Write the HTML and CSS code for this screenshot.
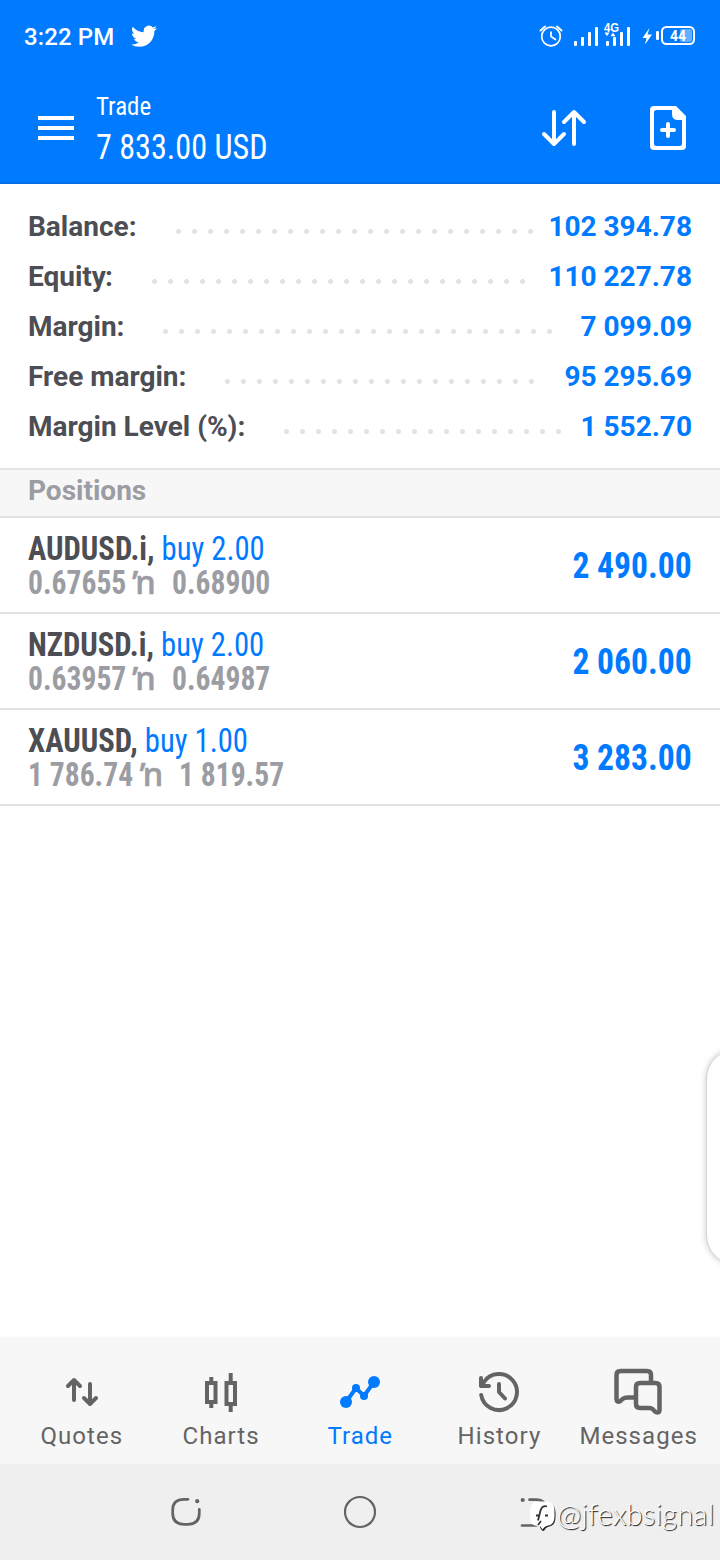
FILE: index.html
```html
<!DOCTYPE html>
<html lang="en">
<head>
<meta charset="utf-8">
<title>Trade</title>
<link rel="stylesheet" href="styles.css">
</head>
<body>
<div class="screen">
  <header class="top">
    <div class="status">
      <span class="clock">3:22 PM</span>
      <svg class="bird" width="26" height="22" viewBox="0 0 24 19.5"><path fill="#fff" d="M23.95 2.57a10 10 0 0 1-2.82.77 4.96 4.96 0 0 0 2.16-2.72c-.95.55-2 .95-3.13 1.18a4.92 4.92 0 0 0-8.38 4.48C7.69 6.1 4.07 4.13 1.64 1.16a4.82 4.82 0 0 0-.67 2.48c0 1.71.87 3.21 2.19 4.1a4.9 4.9 0 0 1-2.23-.62v.06a4.92 4.92 0 0 0 3.95 4.83 5 5 0 0 1-2.21.08 4.94 4.94 0 0 0 4.6 3.42A9.87 9.87 0 0 1 0 17.54a14 14 0 0 0 7.55 2.21c9.05 0 14-7.5 14-13.98 0-.21 0-.42-.02-.63a9.94 9.94 0 0 0 2.46-2.55z"/></svg>
      <svg class="system" width="160" height="30" viewBox="538 20 160 30" fill="none" stroke="#fff">
        <g stroke-width="1.7" stroke-linecap="round"><circle cx="551" cy="36.5" r="9.3"/><path d="M551 32v4.5l4.500 3"/><path d="M540.5 30.5l4.500-4M561.500 30.500l-4.500-4" stroke-width="2"/></g>
        <g fill="#fff" stroke="none">
          <rect x="574" y="41" width="3" height="5" rx="1"/><rect x="581" y="37" width="3" height="9" rx="1"/><rect x="588" y="32" width="3" height="14" rx="1"/><rect x="595" y="27" width="3" height="19" rx="1"/>
          <rect x="606" y="41" width="3" height="5" rx="1"/><rect x="613" y="37" width="3" height="9" rx="1"/><rect x="620" y="32" width="3" height="14" rx="1"/><rect x="627" y="27" width="3" height="19" rx="1"/>
          <path d="M604.500 32.500h5l-2.500 3.800zM610.500 36.300h5l-2.500-3.800z"/>
          <path d="M649.500 28l-7 10h4l-1.500 6.500 7-10h-4.500z"/><rect x="656" y="31" width="3" height="9" rx="1.300"/>
          <rect x="680" y="29" width="12" height="13" rx="2" fill="#66aeff"/>
          <text x="604" y="31.500" class="net" textLength="15" lengthAdjust="spacingAndGlyphs">4G</text>
          <text x="670" y="41.300" class="batt" textLength="16" lengthAdjust="spacingAndGlyphs">44</text>
        </g>
        <rect x="662" y="27" width="32" height="17" rx="4.500" stroke-width="2"/>
      </svg>
    </div>
    <div class="appbar">
      <svg class="menu" width="36" height="24" viewBox="0 0 36 24"><path d="M0 2h36M0 12h36M0 22h36" stroke="#fff" stroke-width="4"/></svg>
      <div class="titles">
        <div class="title cond">Trade</div>
        <div class="total cond">7 833.00 USD</div>
      </div>
      <svg class="sort" width="46" height="38" viewBox="541 109 46 38" fill="none" stroke="#fff" stroke-width="4" stroke-linecap="round" stroke-linejoin="round"><path d="M554 112v32M544 134l10 10 10-10M574 144v-32M564 122l10-10 10 10"/></svg>
      <svg class="add" width="36" height="44" viewBox="650 106 36 44"><path fill="#fff" fill-rule="evenodd" d="M654 106h22l10 10v30q0 4-4 4h-28q-4 0-4-4v-36q0-4 4-4zM656.500 110q-2.500 0-2.500 2.500v31q0 2.500 2.500 2.500h23q2.500 0 2.500-2.500v-23.500h-4q-6 0-6-6v-4z"/><path d="M668 124v12M662 130h12" stroke="#fff" stroke-width="4" stroke-linecap="round"/></svg>
    </div>
  </header>

  <section class="account">
    <div class="row"><span class="label">Balance:</span><span class="dots" style="--n:23"></span><span class="value">102 394.78</span></div>
    <div class="row"><span class="label">Equity<span class="tight">:</span></span><span class="dots" style="--n:24"></span><span class="value">110 227.78</span></div>
    <div class="row"><span class="label">Margin:</span><span class="dots" style="--n:25"></span><span class="value">7 099.09</span></div>
    <div class="row"><span class="label">Free margin:</span><span class="dots" style="--n:20"></span><span class="value">95 295.69</span></div>
    <div class="row"><span class="label">Margin Level (%):</span><span class="dots" style="--n:18"></span><span class="value">1 552.70</span></div>
  </section>

  <h2 class="heading">Positions</h2>

  <main class="positions">
    <article class="position">
      <div class="info">
        <div class="deal cond"><b>AUDUSD.i,</b> <span class="side">buy 2.00</span></div>
        <div class="prices cond"><span class="num">0.67655</span><span class="mark">ŉ</span><span class="num">0.68900</span></div>
      </div>
      <div class="profit cond">2 490.00</div>
    </article>
    <article class="position">
      <div class="info">
        <div class="deal cond"><b>NZDUSD.i,</b> <span class="side">buy 2.00</span></div>
        <div class="prices cond"><span class="num">0.63957</span><span class="mark">ŉ</span><span class="num">0.64987</span></div>
      </div>
      <div class="profit cond">2 060.00</div>
    </article>
    <article class="position">
      <div class="info">
        <div class="deal cond"><b>XAUUSD,</b> <span class="side">buy 1.00</span></div>
        <div class="prices cond"><span class="num">1 786.74</span><span class="mark">ŉ</span><span class="num">1 819.57</span></div>
      </div>
      <div class="profit cond">3 283.00</div>
    </article>
  </main>

  <div class="edge-panel"></div>

  <nav class="tabs">
    <div class="tab"><svg width="52" height="52" viewBox="56 1366 52 52" fill="none" stroke="currentColor" stroke-width="4" stroke-linecap="round" stroke-linejoin="round"><path d="M74 1400v-20M68 1386l6-6 6 6M90 1384v20M84 1398l6 6 6-6"/></svg><span>Quotes</span></div>
    <div class="tab"><svg width="52" height="52" viewBox="195 1366 52 52" fill="none" stroke="currentColor" stroke-width="4"><path d="M207 1383h8.500v19h-8.500zM211.300 1377v5M211.300 1403v5M226.500 1383h8.500v21h-8.500zM230.700 1373v9M230.700 1405v7"/></svg><span>Charts</span></div>
    <div class="tab active"><svg width="52" height="52" viewBox="334 1366 52 52" fill="none" stroke="currentColor" stroke-width="4"><path d="M346 1402l10-14 8 8 10-14"/><g fill="currentColor" stroke="none"><circle cx="346" cy="1402" r="6"/><circle cx="356" cy="1388" r="4"/><circle cx="364" cy="1396" r="4"/><circle cx="374" cy="1382" r="6"/></g></svg><span>Trade</span></div>
    <div class="tab"><svg width="52" height="52" viewBox="473 1366 52 52" fill="none" stroke="currentColor" stroke-width="4" stroke-linecap="round" stroke-linejoin="round"><path d="M481.200 1395a18 18 0 1 0 2.800-13l-3 4M481 1378v8h8M499 1384v8l6 6.500"/></svg><span>History</span></div>
    <div class="tab"><svg width="52" height="52" viewBox="612 1366 52 52" fill="none" stroke="currentColor" stroke-width="4.500" stroke-linecap="round" stroke-linejoin="round"><path d="M651 1382v-7q0-4-4-4h-26.500q-4 0-4 4v24q0 4 4 2l2-2q2-1.500 5-1.500h6M640 1383h15.500q4 0 4 4v23q0 3.500-4 2l-3-3q-1-1-3-1h-9.500q-4 0-4-4v-17q0-4 4-4z"/></svg><span>Messages</span></div>
  </nav>

  <footer class="system-nav">
    <svg width="36" height="36" viewBox="168 1494 36 36" fill="none" stroke="#646464" stroke-width="2.700" stroke-linecap="round"><path d="M188 1499.300h-4q-11.300 0-11.300 10.500v3.500q0 11 11.300 11h4q11.300 0 11.300-11v-4"/><circle cx="197.200" cy="1501.200" r="2.100" fill="#646464" stroke="none"/></svg>
    <svg width="36" height="36" viewBox="0 0 36 36" fill="none" stroke="#646464" stroke-width="2.200"><circle cx="18" cy="18" r="15"/></svg>
    <svg width="36" height="36" viewBox="516 1494 36 36" fill="none" stroke="#646464" stroke-width="2.700" stroke-linecap="round"><path d="M529.500 1499.700h6q11.500 0 11.500 12.300t-11.500 13.500h-13.500"/><circle cx="522.700" cy="1500" r="2.100" fill="#646464" stroke="none"/></svg>
    <div class="watermark">
      <svg width="30" height="34" viewBox="526 1500 30 34"><path d="M540 1504h8q7.500 1 7.500 9v5q0 8-6 9.500-4 .5-5.500 4.500l-2-.5-2-3z" fill="#222"/><path d="M538 1502.500h8q8.500 0 8.500 9v6q0 7.500-6 9-4 .5-6 4l-2.500-3.500h-2q-8 0-8-9v-6q0-9.500 8-9.500z" fill="#fff"/><path d="M547 1507.500q-5-1.500-6.500 4l-2.500 10M536 1516.500h3M545 1516.500h3M541 1522l-3 4" fill="none" stroke="#333" stroke-width="1.800"/></svg>
      <span>@jfexbsignal</span>
    </div>
  </footer>
</div>
</body>
</html>
```
FILE: styles.css
```css
* { box-sizing: border-box; }
body { margin: 0; font-family: Roboto, "Liberation Sans", sans-serif; background: #fff; }
svg { display: block; flex: none; }
.screen { position: relative; display: flex; flex-direction: column; width: 720px; height: 1560px; overflow: hidden; }
.cond { font-family: "Roboto Condensed", Roboto, sans-serif; font-stretch: 75%; white-space: pre; transform-origin: left center; }

.top { height: 184px; background: #007aff; border-bottom: 2px solid #006ee6; color: #fff; }
.status { display: flex; align-items: center; height: 72px; padding: 0 22px 0 24px; }
.clock { font-size: 24px; font-weight: 500; width: 107px; line-height: 28px; white-space: nowrap; padding-top: 2px; letter-spacing: .1px; }
.system { margin-left: auto; margin-top: -2px; }
.net { font: 700 13px "Liberation Sans", sans-serif; }
.batt { font: 700 15.500px Roboto, sans-serif; }
.appbar { display: flex; align-items: center; height: 110px; padding: 0 34px 0 38px; }
.menu { margin-top: 2px; }
.titles { flex: 1; margin-left: 22px; padding-top: 1px; }
.title { font-size: 26.500px; line-height: 38px; transform: scaleX(.94); }
.total { font-size: 34.500px; line-height: 44px; transform: scaleX(.932); }
.sort { margin-right: 63px; margin-top: 2px; }
.add { margin-top: 2px; }

.account { height: 284px; padding-top: 17px; }
.row { display: flex; align-items: center; height: 50px; padding: 0 28px; font-size: 28px; font-weight: 700; color: #4d4d54; white-space: nowrap; }
.tight { margin-left: -1px; }
.dots { width: calc(var(--n) * 16px); height: 5px; margin: 10px 0 0 39px; background: radial-gradient(circle at 2.5px 2.5px, #e3e3e5 2.2px, transparent 2.8px) 0 0 / 16px 5px; }
.value { margin-left: auto; color: #007aff; }

.heading { height: 50px; margin: 0; padding: 0 28px; border-top: 2px solid #e3e3e3; border-bottom: 2px solid #e3e3e3; background: #f7f7f7; color: #9c9ca3; font-size: 28px; font-weight: 700; line-height: 42px; }
.position { display: flex; align-items: center; justify-content: space-between; height: 96px; padding: 2px 28px 0; border-bottom: 2px solid #e3e3e3; }
.deal, .prices { height: 34px; font-size: 32.500px; line-height: 34px; }
.deal { color: #4d4d54; transform: scaleX(.943); }
.side { color: #007aff; }
.prices { display: flex; color: #9c9ca3; font-weight: 700; }
.num { transform: scaleX(.91); transform-origin: left center; margin-right: -9.500px; }
.mark { width: 45px; margin-top: -1px; padding-left: 6px; font-family: "Noto Sans", sans-serif; font-size: 32.500px; font-weight: 500; font-stretch: 100%; -webkit-text-stroke: .6px #9c9ca3; }
.profit { margin-top: -2px; font-size: 36.500px; font-weight: 700; color: #007aff; transform: scaleX(.92); transform-origin: right center; }

.edge-panel { position: absolute; left: 706px; top: 1049px; width: 60px; height: 216px; border: 1px solid #d4d4d4; border-radius: 32px; background: #fff; box-shadow: 0 0 6px rgba(0, 0, 0, .22); }

.tabs { display: flex; height: 126px; margin-top: auto; padding: 28px 12px 0; background: #f7f7f7; box-shadow: 0 -1px 3px rgba(0, 0, 0, .04); color: #646464; }
.tab { display: flex; flex: 1; flex-direction: column; align-items: center; font-size: 24px; line-height: 32px; letter-spacing: 1.050px; }
.tab span { margin: 2px 0 0 .5px; }
.active { color: #007aff; }

.system-nav { position: relative; display: flex; justify-content: space-between; align-items: center; height: 96px; padding: 0 168px; background: #efefef; }
.watermark { position: absolute; left: 526px; top: 35px; display: flex; align-items: center; color: #fff; font: 300 29px/34px Lato, sans-serif; letter-spacing: .25px; text-shadow: 1px 1px 1px #111; }
.watermark span { margin: -5px 0 0 1px; }
```
